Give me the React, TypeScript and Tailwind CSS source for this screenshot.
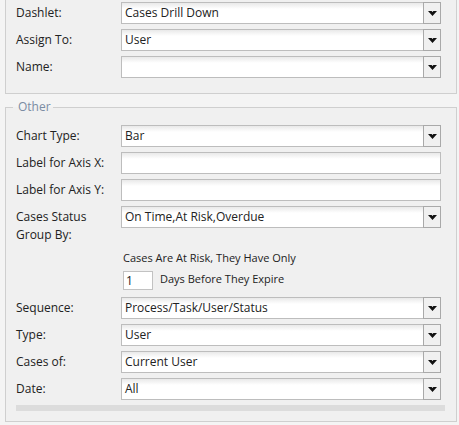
import React from "react";

const Arrow = () => (
  <svg width="9" height="5" viewBox="0 0 9 5" className="block">
    <path d="M0 0 H3.6 L4.5 0.9 L5.4 0 H9 L4.5 5 Z" fill="#111" />
  </svg>
);

const Select = ({ value }: { value?: string }) => (
  <div className="flex h-[22px] w-[320px]">
    <div className="flex-1 flex items-center border border-r-0 border-[#bdbdbd] bg-[linear-gradient(to_bottom,#e9e9e9,#ffffff_6px)] pl-[3px] text-[12px] text-[#222] whitespace-nowrap overflow-hidden">
      {value}
    </div>
    <div className="w-[18px] flex items-center justify-center border border-[#a9a9a9] bg-[#f0f0f0]">
      <Arrow />
    </div>
  </div>
);

const Input = () => (
  <div className="h-[22px] w-[320px] border border-[#bdbdbd] bg-[linear-gradient(to_bottom,#e9e9e9,#ffffff_6px)]" />
);

const Row = ({ label, children }: { label: string; children: React.ReactNode }) => (
  <div className="flex items-center h-[22px]">
    <div className="w-[105px] text-[12px] text-[#222] whitespace-nowrap">{label}</div>
    {children}
  </div>
);

export default function App() {
  return (
    <div className="w-[459px] h-[425px] bg-[#f4f4f4] overflow-hidden font-['Open_Sans',sans-serif] text-[12px] text-[#222]">
      <div className="ml-[5px] w-[452px] border-x border-b border-[#cfcfcf] bg-[#f0f0f0] pt-[2px] pb-[15px] pl-[10px] flex flex-col gap-[5px]">
        <Row label="Dashlet:"><Select value="Cases Drill Down" /></Row>
        <Row label="Assign To:"><Select value="User" /></Row>
        <Row label="Name:"><Select /></Row>
      </div>

      <fieldset className="mt-[5px] ml-[5px] w-[452px] border border-[#cfcfcf] bg-[#f0f0f0] pl-[10px] pr-[10px] pt-[10px] pb-[10px]">
        <legend className="ml-[-3px] pl-[5px] pr-[2px] text-[12px] leading-[16px] text-[#7b8ca3]">Other</legend>
        <div className="flex flex-col gap-[5px]">
          <Row label="Chart Type:"><Select value="Bar" /></Row>
          <Row label="Label for Axis X:"><Input /></Row>
          <Row label="Label for Axis Y:"><Input /></Row>
          <div className="flex items-start">
            <div className="w-[105px] pt-[2px] leading-[18px] text-[12px] text-[#222]">
              Cases Status<br />Group By:
            </div>
            <Select value="On Time,At Risk,Overdue" />
          </div>
        </div>

        <div className="ml-[107px] mt-[7px] text-[11px] leading-[14px] text-[#222]">
          Cases Are At Risk, They Have Only
        </div>
        <div className="ml-[107px] mt-[6px] flex items-center gap-[7px] text-[11px] text-[#222]">
          <div className="w-[30px] h-[19px] border border-[#c2c2c2] bg-white pl-[2px] flex items-center text-[12px]">1</div>
          <span className="mt-[-3px]">Days Before They Expire</span>
        </div>

        <div className="mt-[7px] flex flex-col gap-[5px]">
          <Row label="Sequence:"><Select value="Process/Task/User/Status" /></Row>
          <Row label="Type:"><Select value="User" /></Row>
          <Row label="Cases of:"><Select value="Current User" /></Row>
          <Row label="Date:"><Select value="All" /></Row>
        </div>

        <div className="mt-[5px] h-[6px] w-[429px] bg-[#dcdcdc]" />
      </fieldset>
    </div>
  );
}
